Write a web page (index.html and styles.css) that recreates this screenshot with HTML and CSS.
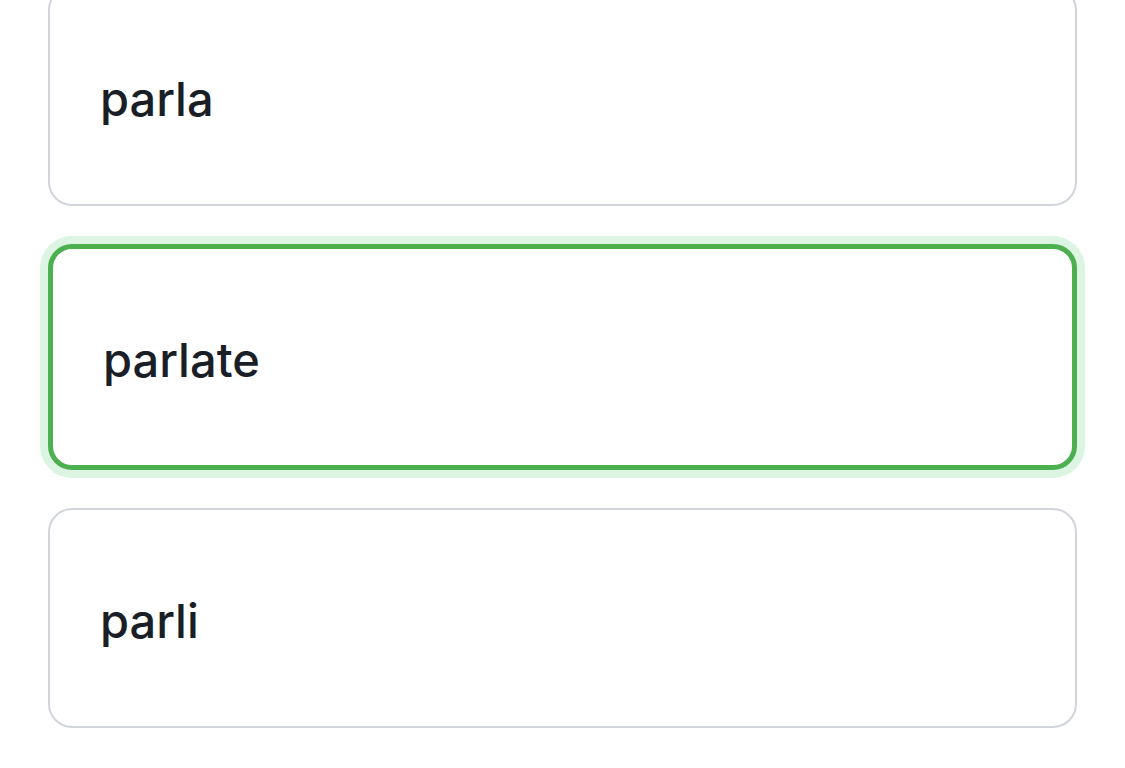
FILE: index.html
```html
<!DOCTYPE html>
<html>
<head>
<meta charset="utf-8">
<link rel="stylesheet" href="styles.css">
</head>
<body>
<div class="list">
  <div class="option"><span class="label">parla</span></div>
  <div class="option selected"><span class="label">parlate</span></div>
  <div class="option"><span class="label">parli</span></div>
</div>
</body>
</html>
```
FILE: styles.css
```css
html, body {
  margin: 0;
  padding: 0;
  background: #ffffff;
}
body {
  font-family: Inter, "Noto Sans", sans-serif;
  overflow: hidden;
}
.list {
  display: flex;
  flex-direction: column;
  gap: 38px;
  margin: -14px 48px 0 48px;
}
.option {
  display: flex;
  align-items: center;
  height: 216px;
  padding: 0 50px;
  border: 2px solid #d1d5db;
  border-radius: 24px;
  background: #ffffff;
}
.option.selected {
  border: 5px solid #4caf50;
  box-shadow: 0 0 0 8px #dcf5e3;
}
.label {
  font-size: 47px;
  font-weight: 500;
  color: #1a1e26;
  line-height: 1;
  padding-top: 4px;
}
```
